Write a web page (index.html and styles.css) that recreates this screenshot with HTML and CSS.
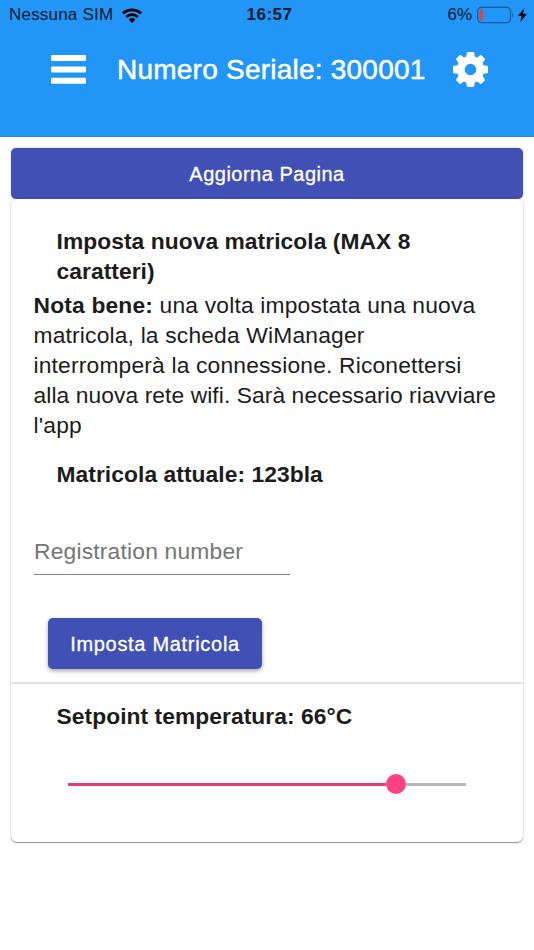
FILE: index.html
```html
<!DOCTYPE html>
<html lang="it">

<head>
    <meta charset="UTF-8">
    <meta name="viewport" content="width=device-width, initial-scale=1.0">
    <title>Numero Seriale</title>
    <link rel="stylesheet" href="styles.css">
</head>

<body>
    <header class="header">
        <div class="status">
            <div class="carrier">
                <span class="sim">Nessuna SIM</span>
                <svg class="wifi" width="20" height="15" viewBox="0 0 20 15">
                    <path d="M0 4.6A14 14 0 0 1 20 4.6L18.1 6.6A11.4 11.4 0 0 0 1.9 6.6Z" />
                    <path d="M3.3 8.1A9.5 9.5 0 0 1 16.7 8.1L14.8 10A6.8 6.8 0 0 0 5.2 10Z" />
                    <path d="M6.6 11.4A4.9 4.9 0 0 1 13.4 11.4L10 14.9Z" />
                </svg>
            </div>
            <span class="clock">16:57</span>
            <div class="power">
                <span class="percent">6%</span>
                <svg class="battery" width="38" height="18" viewBox="0 0 38 18">
                    <rect x="0.7" y="1.2" width="32.8" height="15.4" rx="4" fill="none" stroke="#17609f" stroke-width="1.4" />
                    <rect x="2.6" y="3.6" width="3.4" height="10.8" rx="1" fill="#e8413c" />
                    <path d="M35.2 6.2Q37.4 8.9 35.2 11.6Z" fill="#17609f" />
                </svg>
                <svg class="bolt" width="9" height="14" viewBox="0 0 9 14">
                    <path d="M6.4 0L0 7.8H3.7L2.2 14L9 5.8H5Z" />
                </svg>
            </div>
        </div>
        <div class="toolbar">
            <svg class="menu" width="35" height="29" viewBox="0 0 35 29">
                <rect x="0" y="0" width="35" height="6" rx="1.2" />
                <rect x="0" y="11.4" width="35" height="6" rx="1.2" />
                <rect x="0" y="22.8" width="35" height="6" rx="1.2" />
            </svg>
            <h1 class="title">Numero Seriale: 300001</h1>
            <svg class="gear" width="35" height="35" viewBox="0 0 35 35">
                <path fill-rule="evenodd" d="M13.8 0.8Q14 0 14.8 0H20.2Q21 0 21.2 0.8L21.8 4.6L24 5.5L27.2 3.2Q27.8 2.8 28.4 3.3L31.7 6.6Q32.2 7.2 31.8 7.8L29.5 11L30.4 13.2L34.2 13.8Q35 14 35 14.8V20.2Q35 21 34.2 21.2L30.4 21.8L29.5 24L31.8 27.2Q32.2 27.8 31.7 28.4L28.4 31.7Q27.8 32.2 27.2 31.8L24 29.5L21.8 30.4L21.2 34.2Q21 35 20.2 35H14.8Q14 35 13.8 34.2L13.2 30.4L11 29.5L7.8 31.8Q7.2 32.2 6.6 31.7L3.3 28.4Q2.8 27.8 3.2 27.2L5.5 24L4.6 21.8L0.8 21.2Q0 21 0 20.2V14.8Q0 14 0.8 13.8L4.6 13.2L5.5 11L3.2 7.8Q2.8 7.2 3.3 6.6L6.6 3.3Q7.2 2.8 7.8 3.2L11 5.5L13.2 4.6ZM17.5 11.7A5.8 5.8 0 1 0 17.5 23.3A5.8 5.8 0 1 0 17.5 11.7Z" />
            </svg>
        </div>
    </header>
    <main class="content">
        <button class="btn btn-block">Aggiorna Pagina</button>
        <div class="card">
            <section class="serial">
                <h2 class="heading">Imposta nuova matricola (MAX 8<br>caratteri)</h2>
                <p class="note"><b>Nota bene:</b> una volta impostata una nuova<br>matricola, la scheda WiManager<br>interromperà la connessione. Riconettersi<br><span class="tight">alla nuova rete wifi. Sarà necessario riavviare</span><br>l'app</p>
                <h2 class="heading heading-current">Matricola attuale: 123bla</h2>
                <input class="field" type="text" placeholder="Registration number">
                <button class="btn btn-set">Imposta Matricola</button>
            </section>
            <section class="setpoint">
                <h2 class="heading">Setpoint temperatura: 66°C</h2>
                <div class="slider">
                    <div class="fill"></div>
                    <div class="thumb"></div>
                    <div class="rest"></div>
                </div>
            </section>
        </div>
    </main>
</body>
</html>
```

FILE: styles.css
```css
* {
    margin: 0;
    padding: 0;
    box-sizing: border-box;
}

body {
    min-height: 100vh;
    background: #fff;
    color: #1c1c1c;
    font-family: "Liberation Sans", Arial, sans-serif;
    font-size: 22.8px;
}

svg {
    display: block;
    flex: none;
}

.header {
    height: 137px;
    background: #2296f7;
    border-bottom: 1px solid #2a88e0;
}

.status {
    display: grid;
    grid-template-columns: 1fr auto 1fr;
    align-items: center;
    height: 30px;
    padding: 0 7px 0 9px;
    color: #07192b;
    font-size: 17px;
    white-space: nowrap;
}

.carrier,
.power {
    display: flex;
    align-items: center;
}

.sim {
    letter-spacing: 0.2px;
}

.wifi {
    margin-left: 9px;
}

.clock {
    padding-left: 3px;
    font-weight: bold;
    letter-spacing: 0.5px;
}

.power {
    justify-content: flex-end;
}

.battery {
    margin-left: 5px;
}

.bolt {
    margin-left: 3px;
}

.toolbar {
    display: flex;
    align-items: center;
    height: 78px;
    padding: 0 46px 0 51px;
}

.menu,
.gear {
    fill: #fff;
}

.title {
    flex: 1;
    margin-left: 31px;
    padding-top: 2px;
    color: #fff;
    font-size: 28px;
    font-weight: normal;
    letter-spacing: 0.23px;
    white-space: nowrap;
    -webkit-text-stroke: 0.5px #fff;
}

.content {
    padding: 11px 11px 0;
}

.btn {
    display: block;
    height: 51px;
    padding-top: 2px;
    border: none;
    border-radius: 5px;
    background: #4150b5;
    box-shadow: 0 2px 4px rgba(0, 0, 0, 0.35);
    color: #fff;
    font-family: inherit;
    font-size: 20px;
    letter-spacing: 0.5px;
    white-space: nowrap;
    -webkit-text-stroke: 0.3px #fff;
}

.btn-block {
    width: 512px;
    box-shadow: 0 0 3px rgba(0, 0, 0, 0.2);
}

.card {
    height: 643px;
    border-radius: 6px;
    background: #fff;
    box-shadow: 0 1px 1px rgba(0, 0, 0, 0.4), 0 0 3px rgba(0, 0, 0, 0.15);
}

.serial {
    height: 485px;
    padding: 27px 23px 0;
    border-bottom: 2px solid #e1e1e1;
}

.heading {
    margin-left: 22.5px;
    font-size: 22.8px;
    letter-spacing: 0.06px;
    line-height: 30px;
    white-space: nowrap;
}

.note {
    margin-top: 4px;
    margin-left: -0.5px;
    letter-spacing: 0.18px;
    line-height: 30px;
    white-space: nowrap;
}

.tight {
    letter-spacing: 0.08px;
}

.heading-current {
    margin-top: 19px;
}

.field {
    display: block;
    width: 256px;
    height: 46px;
    margin-top: 40px;
    border: none;
    border-bottom: 1px solid #858585;
    background: none;
    color: #1c1c1c;
    font-family: inherit;
    font-size: 22.8px;
    letter-spacing: 0.2px;
}

.field::placeholder {
    color: #757575;
}

.btn-set {
    width: 214px;
    margin: 43px 0 0 14px;
    letter-spacing: 0.7px;
}

.setpoint {
    padding: 17px 57px 0 23px;
}

.slider {
    display: flex;
    align-items: center;
    height: 20px;
    margin: 43px 0 0 33.5px;
}

.fill {
    width: 318px;
    height: 3px;
    background: #e93a78;
}

.thumb {
    width: 20px;
    height: 20px;
    border-radius: 50%;
    background: #ff4081;
}

.rest {
    flex: 1;
    height: 3px;
    background: #b7b7b7;
}
```
